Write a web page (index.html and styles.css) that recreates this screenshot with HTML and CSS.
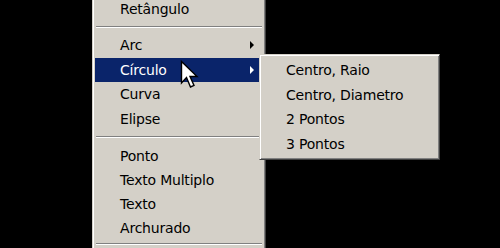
FILE: index.html
```html
<!DOCTYPE html>
<html>
<head>
<meta charset="utf-8">
<link rel="stylesheet" href="styles.css">
</head>
<body>
<div class="stage">
  <ul class="menu main">
    <li class="item">Retângulo</li>
    <li class="sep"></li>
    <li class="item tall">Arc<span class="tri"></span></li>
    <li class="item tall active">Círculo<span class="tri"></span></li>
    <li class="item tall">Curva</li>
    <li class="item tall">Elipse</li>
    <li class="sep sep2"></li>
    <li class="item">Ponto</li>
    <li class="item">Texto Multiplo</li>
    <li class="item">Texto</li>
    <li class="item">Archurado</li>
    <li class="sep sep3"></li>
    <li class="item"></li>
  </ul>
  <ul class="menu submenu">
    <li class="item">Centro, Raio</li>
    <li class="item">Centro, Diametro</li>
    <li class="item">2 Pontos</li>
    <li class="item">3 Pontos</li>
  </ul>
  <svg class="cursor" width="20" height="30" viewBox="0 0 20 30">
    <path d="M1.5 1.5 L1.5 23 L6.5 17.5 L10.5 27 L14 25.5 L10 16.5 L17 16.5 Z" fill="#fff" stroke="#000" stroke-width="1.4" stroke-linejoin="miter"/>
  </svg>
</div>
</body>
</html>
```
FILE: styles.css
```css
html, body {
  margin: 0;
  padding: 0;
  background: #000;
  width: 500px;
  height: 248px;
  overflow: hidden;
}
.stage {
  position: relative;
  display: flow-root;
  width: 500px;
  height: 248px;
  font-family: "DejaVu Sans", sans-serif;
  font-size: 14px;
  letter-spacing: -0.2px;
  color: #000;
}
.menu {
  list-style: none;
  margin: 0;
  padding: 2px;
  background: #d4d0c8;
  border: 1px solid;
  border-color: #d4d0c8 #404040 #404040 #d4d0c8;
  box-shadow: inset 1px 1px #fff, inset -1px -1px #808080;
}
.main {
  margin-left: 92px;
  margin-top: -6px;
  width: 168px;
}
.item {
  height: 24px;
  line-height: 25px;
  padding-left: 25px;
  position: relative;
  white-space: nowrap;
}
.tall {
  height: 24.5px;
}
.active {
  background: #0a246a;
  color: #fff;
}
.sep {
  height: 12px;
  position: relative;
}
.sep::before {
  content: "";
  position: absolute;
  left: 1px;
  right: 1px;
  top: 5px;
  border-top: 1px solid #808080;
  border-bottom: 1px solid #fff;
}
.sep2 {
  height: 13px;
}
.sep2::before {
  top: 5px;
}
.sep3::before {
  top: 3px;
}
.tri {
  position: absolute;
  right: 9px;
  top: 8px;
  width: 0;
  height: 0;
  border-top: 4px solid transparent;
  border-bottom: 4px solid transparent;
  border-left: 4px solid #000;
}
.active .tri {
  border-left-color: #fff;
}
.submenu {
  position: absolute;
  left: 259px;
  top: 54px;
  width: 175px;
  padding-top: 3px;
  padding-bottom: 3px;
}
.submenu .item {
  height: 24.5px;
  line-height: 24px;
  padding-left: 24px;
}
.cursor {
  position: absolute;
  left: 180px;
  top: 60px;
}
```
